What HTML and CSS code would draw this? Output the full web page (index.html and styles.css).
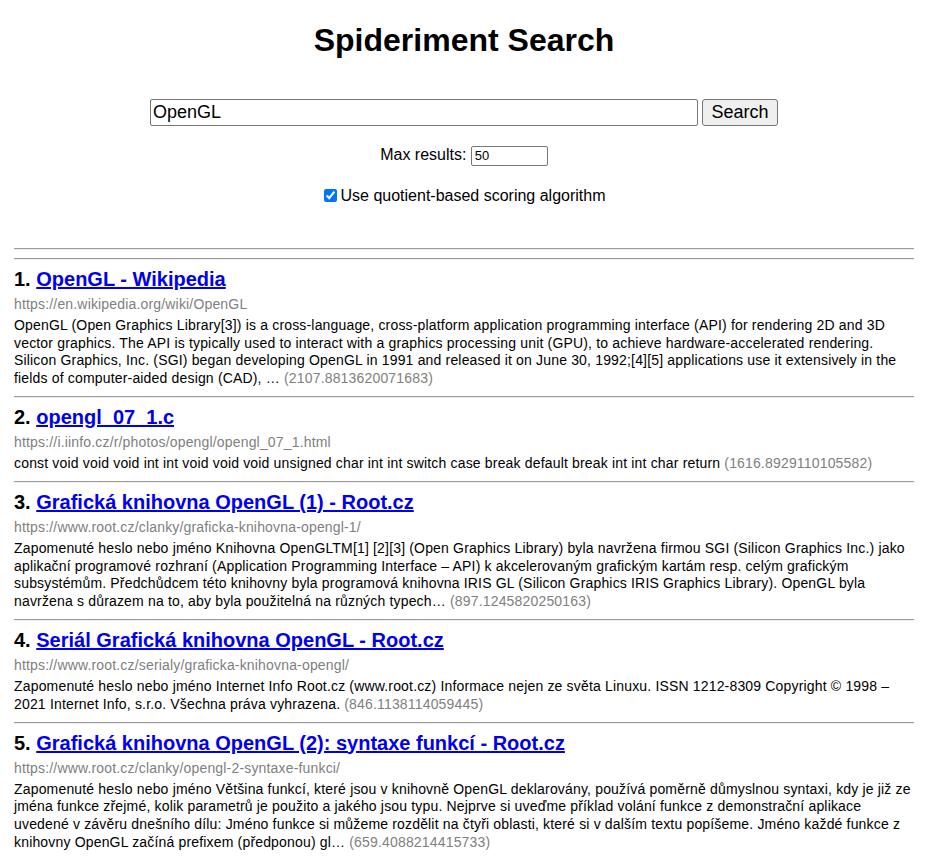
FILE: index.html
```html
<!DOCTYPE html>
<html lang="cs">
<head>
<meta charset="utf-8">
<title>Spideriment Search</title>
<link rel="stylesheet" href="styles.css">
</head>
<body>
<div class="page">
  <h1 class="title">Spideriment Search</h1>
  <form class="search-form">
    <div class="search-row">
      <input class="query" type="text" value="OpenGL">
      <button class="search-btn" type="button">Search</button>
    </div>
    <div class="max-row">
      <label>Max results: <input class="max-input" type="text" value="50"></label>
    </div>
    <div class="check-row">
      <label><input class="check" type="checkbox" checked>Use quotient-based scoring algorithm</label>
    </div>
  </form>
  <hr class="sep">
  <div class="results">
    <div class="result">
      <hr class="sep">
      <h3 class="r-title">1. <a href="#">OpenGL - Wikipedia</a></h3>
      <div class="r-url">https://en.wikipedia.org/wiki/OpenGL</div>
      <p class="r-text">OpenGL (Open Graphics Library[3]) is a cross-language, cross-platform application programming interface (API) for rendering 2D and 3D vector graphics. The API is typically used to interact with a graphics processing unit (GPU), to achieve hardware-accelerated rendering. Silicon Graphics, Inc. (SGI) began developing OpenGL in 1991 and released it on June 30, 1992;[4][5] applications use it extensively in the fields of computer-aided design (CAD), … <span class="score">(2107.8813620071683)</span></p>
    </div>
    <div class="result">
      <hr class="sep">
      <h3 class="r-title">2. <a href="#">opengl_07_1.c</a></h3>
      <div class="r-url">https://i.iinfo.cz/r/photos/opengl/opengl_07_1.html</div>
      <p class="r-text">const void void void int int void void void unsigned char int int switch case break default break int int char return <span class="score">(1616.8929110105582)</span></p>
    </div>
    <div class="result">
      <hr class="sep">
      <h3 class="r-title">3. <a href="#">Grafická knihovna OpenGL (1) - Root.cz</a></h3>
      <div class="r-url">https://www.root.cz/clanky/graficka-knihovna-opengl-1/</div>
      <p class="r-text">Zapomenuté heslo nebo jméno Knihovna OpenGLTM[1] [2][3] (Open Graphics Library) byla navržena firmou SGI (Silicon Graphics Inc.) jako aplikační programové rozhraní (Application Programming Interface – API) k akcelerovaným grafickým kartám resp. celým grafickým subsystémům. Předchůdcem této knihovny byla programová knihovna IRIS GL (Silicon Graphics IRIS Graphics Library). OpenGL byla navržena s důrazem na to, aby byla použitelná na různých typech… <span class="score">(897.1245820250163)</span></p>
    </div>
    <div class="result">
      <hr class="sep">
      <h3 class="r-title">4. <a href="#">Seriál Grafická knihovna OpenGL - Root.cz</a></h3>
      <div class="r-url">https://www.root.cz/serialy/graficka-knihovna-opengl/</div>
      <p class="r-text">Zapomenuté heslo nebo jméno Internet Info Root.cz (www.root.cz) Informace nejen ze světa Linuxu. ISSN 1212-8309 Copyright © 1998 – 2021 Internet Info, s.r.o. Všechna práva vyhrazena. <span class="score">(846.1138114059445)</span></p>
    </div>
    <div class="result">
      <hr class="sep">
      <h3 class="r-title">5. <a href="#">Grafická knihovna OpenGL (2): syntaxe funkcí - Root.cz</a></h3>
      <div class="r-url">https://www.root.cz/clanky/opengl-2-syntaxe-funkci/</div>
      <p class="r-text">Zapomenuté heslo nebo jméno Většina funkcí, které jsou v knihovně OpenGL deklarovány, používá poměrně důmyslnou syntaxi, kdy je již ze jména funkce zřejmé, kolik parametrů je použito a jakého jsou typu. Nejprve si uveďme příklad volání funkce z demonstrační aplikace uvedené v závěru dnešního dílu: Jméno funkce si můžeme rozdělit na čtyři oblasti, které si v dalším textu popíšeme. Jméno každé funkce z knihovny OpenGL začíná prefixem (předponou) gl… <span class="score">(659.4088214415733)</span></p>
    </div>
  </div>
</div>
</body>
</html>
```
FILE: styles.css
```css
html, body {
  margin: 0;
  padding: 0;
  background: #fff;
}
body {
  font-family: "Liberation Sans", Arial, sans-serif;
  color: #000;
}
.page {
  max-width: 900px;
  margin: 0 14px;
}
.title {
  font-size: 32px;
  font-weight: bold;
  text-align: center;
  margin: 22px 0 0;
  line-height: 37px;
}
.search-form {
  margin-top: 40px;
}
.search-row {
  display: flex;
  justify-content: center;
  gap: 4px;
}
.query {
  width: 548px;
  box-sizing: border-box;
  height: 27px;
  font-family: "Liberation Sans", Arial, sans-serif;
  font-size: 18px;
  padding: 1px 2px;
  border: 1px solid #767676;
  border-radius: 2px;
  margin: 0;
}
.search-btn {
  width: 76px;
  height: 27px;
  box-sizing: border-box;
  font-family: "Liberation Sans", Arial, sans-serif;
  font-size: 18px;
  padding: 0;
  margin: 0;
  background: #efefef;
  border: 1px solid #767676;
  border-radius: 3px;
  color: #000;
}
.max-row {
  text-align: center;
  margin-top: 19px;
  font-size: 16px;
  line-height: 20px;
}
.max-input {
  width: 77px;
  height: 20px;
  box-sizing: border-box;
  font-family: "Liberation Sans", Arial, sans-serif;
  font-size: 13px;
  padding: 1px 3px;
  border: 1px solid #767676;
  border-radius: 2px;
  margin: 0;
  vertical-align: middle;
}
.check-row {
  text-align: center;
  margin-top: 20px;
  font-size: 16px;
  line-height: 20px;
}
.check {
  width: 13px;
  height: 13px;
  margin: 0 3px 0 2px;
  vertical-align: -1px;
  accent-color: #0075ff;
}
.sep {
  border: 0;
  border-top: 1px solid #9a9a9a;
  border-bottom: 1px solid #eeeeee;
  height: 0;
  margin: 0;
}
.search-form + .sep {
  margin-top: 42px;
}
.result > .sep {
  margin-top: 8px;
}
.r-title {
  font-size: 20px;
  font-weight: bold;
  margin: 7px 0 0;
  line-height: 24px;
}
.r-title a {
  color: #0000ee;
  text-decoration: underline;
}
.r-url {
  font-size: 14px;
  letter-spacing: 0.17px;
  color: #808080;
  margin-top: 5px;
  line-height: 16px;
}
.r-text {
  font-size: 14px;
  letter-spacing: 0.17px;
  line-height: 17.8px;
  margin: 5px 0 0;
}
.score {
  color: #808080;
}
```
